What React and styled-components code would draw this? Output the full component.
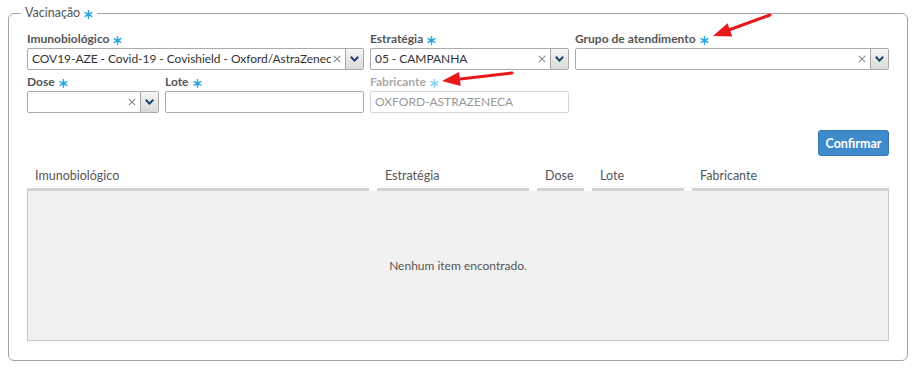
import React from "react";
import styled, { createGlobalStyle } from "styled-components";

const Global = createGlobalStyle`
  html, body { margin: 0; padding: 0; background: #fff; }
  body { font-family: Lato, "Open Sans", Arial, sans-serif; color: #333; }
  * { box-sizing: border-box; }
`;

const Page = styled.div`
  position: relative;
  width: 918px;
  height: 368px;
  padding: 6px 10px 0 8px;
`;

const Fieldset = styled.fieldset`
  margin: 0;
  width: 900px;
  border: 1px solid #a3a3a3;
  border-radius: 6px;
  padding: 11px 18px 19px 18px;
  min-width: 0;
`;

const Legend = styled.legend`
  margin-left: -6px;
  padding: 0 4px;
  font-size: 12.5px;
  line-height: 14px;
  color: #555;
  display: flex;
  align-items: center;
`;

const Row = styled.div`
  display: flex;
  gap: 6px;
  margin-bottom: ${(p) => p.$mb || 0}px;
`;

const Field = styled.div`
  width: ${(p) => p.$w}px;
  display: flex;
  flex-direction: column;
`;

const Label = styled.label`
  font-size: 12px;
  font-weight: 700;
  line-height: 16px;
  margin-bottom: 1px;
  color: ${(p) => (p.$disabled ? "#aaa" : "#555")};
  display: flex;
  align-items: center;
  white-space: nowrap;
`;

const Req = ({ faded }) => (
  <StarSvg viewBox="0 0 9 9" width="9" height="9" $faded={faded}>
    <line x1="4.5" y1="0.6" x2="4.5" y2="8.4" />
    <line x1="1.1" y1="2.55" x2="7.9" y2="6.45" />
    <line x1="1.1" y1="6.45" x2="7.9" y2="2.55" />
    <circle cx="4.5" cy="4.5" r="1.2" />
  </StarSvg>
);

const StarSvg = styled.svg`
  margin-left: 4px;
  margin-top: 2px;
  stroke: ${(p) => (p.$faded ? "#8fd2f0" : "#29a8e0")};
  fill: ${(p) => (p.$faded ? "#8fd2f0" : "#29a8e0")};
  stroke-width: 1.4;
  stroke-linecap: round;
`;

const SelectBox = styled.div`
  height: 22px;
  border: 1px solid #aaa;
  border-radius: 2px;
  display: flex;
  align-items: stretch;
  background: #fff;
  overflow: hidden;
`;

const SelectValue = styled.div`
  flex: 1;
  min-width: 0;
  padding: 0 0 0 4px;
  font-size: 12px;
  letter-spacing: -0.05px;
  line-height: 20px;
  color: #333;
  white-space: nowrap;
  overflow: hidden;
`;

const Clear = styled.span`
  width: 12px;
  display: flex;
  align-items: center;
  justify-content: center;
  margin-right: 2px;
`;

const ClearIcon = () => (
  <svg width="8" height="8" viewBox="0 0 8 8">
    <path d="M0.8 0.8 L7.2 7.2 M7.2 0.8 L0.8 7.2" stroke="#8a8a8a" strokeWidth="1.1" />
  </svg>
);

const ArrowBtn = styled.div`
  width: 18px;
  border-left: 1px solid #aaa;
  background: linear-gradient(#f6f6f6, #d9d9d9);
  display: flex;
  align-items: center;
  justify-content: center;
`;

const Chevron = () => (
  <svg width="9" height="6" viewBox="0 0 9 6">
    <path d="M0.8 0.8 L4.5 4.6 L8.2 0.8" fill="none" stroke="#1c3d6e" strokeWidth="2" />
  </svg>
);

const Select = ({ value }) => (
  <SelectBox>
    <SelectValue>{value}</SelectValue>
    <Clear>
      <ClearIcon />
    </Clear>
    <ArrowBtn>
      <Chevron />
    </ArrowBtn>
  </SelectBox>
);

const Input = styled.div`
  height: 22px;
  border: 1px solid ${(p) => (p.$disabled ? "#d6d6d6" : "#aaa")};
  border-radius: 2px;
  padding: 0 4px;
  font-size: 12px;
  line-height: 20px;
  color: ${(p) => (p.$disabled ? "#999" : "#333")};
`;

const Actions = styled.div`
  display: flex;
  justify-content: flex-end;
  margin-top: 17px;
  margin-bottom: 4px;
`;

const Button = styled.button`
  height: 26px;
  width: 71px;
  padding: 0;
  background: #3f8acb;
  border: 1px solid #3479b5;
  border-radius: 3px;
  color: #fff;
  font-family: Lato, Arial, sans-serif;
  font-size: 12.5px;
  font-weight: 700;
`;

const HeadRow = styled.div`
  display: flex;
`;

const HeadCell = styled.div`
  width: ${(p) => p.$w}px;
  margin-right: ${(p) => (p.$last ? 0 : 8)}px;
  padding: 8px 8px 4px;
  font-size: 12.5px;
  line-height: 16px;
  color: #555;
  border-bottom: 3px solid #d3d3d3;
  white-space: nowrap;
`;

const Body = styled.div`
  height: 150px;
  background: #f1f1f1;
  border: 1px solid #c8c8c8;
  border-top: none;
  display: flex;
  align-items: center;
  justify-content: center;
  font-size: 12px;
  color: #555;
`;

const Overlay = styled.svg`
  position: absolute;
  left: 0;
  top: 0;
  pointer-events: none;
`;

export default function App() {
  return (
    <>
      <Global />
      <Page>
        <Fieldset>
          <Legend>
            Vacinação <Req />
          </Legend>
          <Row $mb={4}>
            <Field $w={337}>
              <Label>
                Imunobiológico <Req />
              </Label>
              <Select value="COV19-AZE - Covid-19 - Covishield - Oxford/AstraZeneca" />
            </Field>
            <Field $w={199}>
              <Label>
                Estratégia <Req />
              </Label>
              <Select value="05 - CAMPANHA" />
            </Field>
            <Field $w={314}>
              <Label>
                Grupo de atendimento <Req />
              </Label>
              <Select value="" />
            </Field>
          </Row>
          <Row>
            <Field $w={132}>
              <Label>
                Dose <Req />
              </Label>
              <Select value="" />
            </Field>
            <Field $w={199}>
              <Label>
                Lote <Req />
              </Label>
              <Input />
            </Field>
            <Field $w={199}>
              <Label $disabled>
                Fabricante <Req faded />
              </Label>
              <Input $disabled>OXFORD-ASTRAZENECA</Input>
            </Field>
          </Row>
          <Actions>
            <Button>Confirmar</Button>
          </Actions>
          <HeadRow>
            <HeadCell $w={342}>Imunobiológico</HeadCell>
            <HeadCell $w={152}>Estratégia</HeadCell>
            <HeadCell $w={47}>Dose</HeadCell>
            <HeadCell $w={92}>Lote</HeadCell>
            <HeadCell $w={197} $last>
              Fabricante
            </HeadCell>
          </HeadRow>
          <Body>Nenhum item encontrado.</Body>
        </Fieldset>
        <Overlay width="918" height="368" viewBox="0 0 918 368">
          <line x1="770" y1="15" x2="726" y2="31" stroke="#e8191b" strokeWidth="3" strokeLinecap="round" />
          <polygon points="713,36 732.3,36.4 727.5,23.2" fill="#e8191b" />
          <line x1="512" y1="73" x2="456" y2="79.5" stroke="#e8191b" strokeWidth="3" strokeLinecap="round" />
          <polygon points="442,81 460.7,86 459.1,72.1" fill="#e8191b" />
        </Overlay>
      </Page>
    </>
  );
}
